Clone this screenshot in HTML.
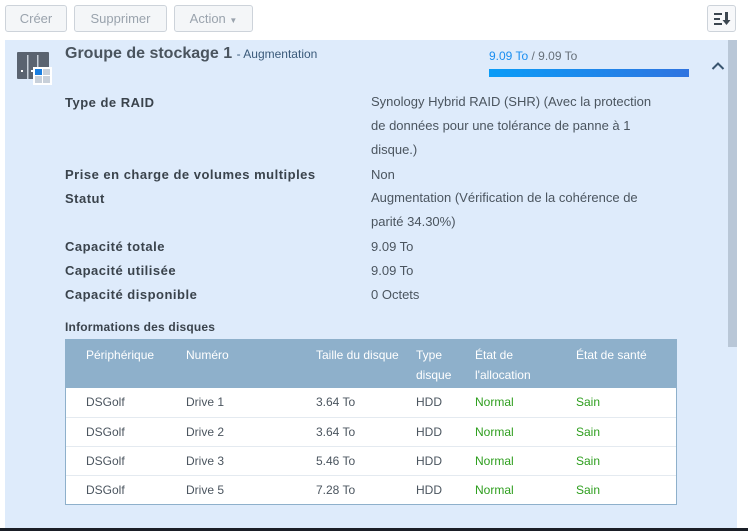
<!DOCTYPE html>
<html><head><meta charset="utf-8"><style>
*{box-sizing:border-box;margin:0;padding:0}
body{width:748px;height:531px;overflow:hidden;background:#fff;font-family:"Liberation Sans",sans-serif;font-size:13px;color:#414b55;position:relative}
.btn{position:absolute;top:5px;height:27px;border:1px solid #cdd3da;border-radius:3px;background:#f4f6f8;color:#9aa3ad;font-size:13px;line-height:25px;text-align:center}
.panel{position:absolute;left:5px;top:40px;width:732px;height:490px;background:#deebfb}
.sb{position:absolute;left:728px;top:40px;width:9px;height:307px;background:#b9c7d7}
.abs{position:absolute;white-space:nowrap}
.lbl{font-weight:bold;color:#3a434c;letter-spacing:0.5px}
.val{color:#4b555f}
table{position:absolute;left:65px;top:339px;width:612px;border-collapse:collapse;font-size:12px}
th{background:#8eb0cb;color:#fff;font-weight:normal;text-align:left;vertical-align:top;line-height:20px;padding:6px 0 0 0;height:49px}
td{background:#fff;height:29px;border-bottom:1px solid #e4eaf0;color:#4b555f}
.g{color:#2e9e1e}
</style></head><body>
<div class="btn" style="left:5px;width:62px">Créer</div>
<div class="btn" style="left:74px;width:93px">Supprimer</div>
<div class="btn" style="left:174px;width:79px">Action <span style="font-size:8px">▼</span></div>
<div class="btn" style="left:707px;width:29px;background:#f7f8fa">
<svg width="20" height="16" viewBox="0 0 20 16" style="margin-top:5px"><g fill="#3c4650"><rect x="2" y="2" width="8" height="2"/><rect x="2" y="7" width="6" height="2"/><rect x="2" y="12" width="8" height="2"/><rect x="13" y="1" width="3" height="9"/><path d="M10.5 9h8l-4 5z"/></g></svg></div>
<div class="panel"></div>
<div class="sb"></div>
<svg class="abs" style="left:16px;top:51px" width="37" height="34" viewBox="0 0 37 34"><rect x="1" y="1" width="32" height="27" rx="1" fill="#5a6370"/><rect x="11" y="4" width="1.5" height="24" fill="#c8d0da"/><rect x="21" y="4" width="1.5" height="24" fill="#c8d0da"/><rect x="5" y="19" width="2" height="2" fill="#fff"/><rect x="15" y="19" width="2" height="2" fill="#fff"/><rect x="17" y="16" width="19" height="18" fill="#fff"/><rect x="19" y="18" width="7" height="6" fill="#1a7ee0"/><rect x="27" y="18" width="7" height="6" fill="#c8d0da"/><rect x="19" y="25" width="7" height="7" fill="#c8d0da"/><rect x="27" y="25" width="7" height="7" fill="#c8d0da"/></svg>
<div class="abs" style="left:65px;top:45px;font-size:16px;font-weight:bold;color:#4a545e">Groupe de stockage 1 <span style="font-weight:normal;font-size:12px;color:#3a5a7a">- Augmentation</span></div>
<div class="abs" style="left:489px;top:49px;font-size:12px;color:#666f78"><span style="color:#1a8ef0">9.09 To</span> / 9.09 To</div>
<div class="abs" style="left:489px;top:69px;width:200px;height:8px;background:linear-gradient(90deg,#0a9cf7,#2f74e0)"></div>
<svg class="abs" style="left:711px;top:61px" width="14" height="10" viewBox="0 0 14 10"><path d="M1.5 8L7 2.5 12.5 8" stroke="#3a5570" stroke-width="2" fill="none"/></svg>
<div class="abs lbl" style="left:65px;top:95px">Type de RAID</div>
<div class="abs val" style="left:371px;top:90px;line-height:24px">Synology Hybrid RAID (SHR) (Avec la protection<br>de données pour une tolérance de panne à 1<br>disque.)</div>
<div class="abs lbl" style="left:65px;top:167px">Prise en charge de volumes multiples</div>
<div class="abs val" style="left:371px;top:167px">Non</div>
<div class="abs lbl" style="left:65px;top:191px">Statut</div>
<div class="abs val" style="left:371px;top:186px;line-height:24px">Augmentation (Vérification de la cohérence de<br>parité 34.30%)</div>
<div class="abs lbl" style="left:65px;top:239px">Capacité totale</div>
<div class="abs val" style="left:371px;top:239px">9.09 To</div>
<div class="abs lbl" style="left:65px;top:263px">Capacité utilisée</div>
<div class="abs val" style="left:371px;top:263px">9.09 To</div>
<div class="abs lbl" style="left:65px;top:287px">Capacité disponible</div>
<div class="abs val" style="left:371px;top:287px">0 Octets</div>
<div class="abs lbl" style="left:65px;top:320px;font-size:12px;letter-spacing:0.2px">Informations des disques</div>
<table>
<tr><th style="width:121px;padding-left:21px">Périphérique</th><th style="width:130px">Numéro</th><th style="width:100px">Taille du disque</th><th style="width:59px">Type<br>disque</th><th style="width:101px">État de<br>l'allocation</th><th>État de santé</th></tr>
<tr><td style="padding-left:21px">DSGolf</td><td>Drive 1</td><td>3.64 To</td><td>HDD</td><td class="g">Normal</td><td class="g">Sain</td></tr>
<tr><td style="padding-left:21px">DSGolf</td><td>Drive 2</td><td>3.64 To</td><td>HDD</td><td class="g">Normal</td><td class="g">Sain</td></tr>
<tr><td style="padding-left:21px">DSGolf</td><td>Drive 3</td><td>5.46 To</td><td>HDD</td><td class="g">Normal</td><td class="g">Sain</td></tr>
<tr><td style="padding-left:21px;border-bottom:1px solid #8eb0cb">DSGolf</td><td style="border-bottom:1px solid #8eb0cb">Drive 5</td><td style="border-bottom:1px solid #8eb0cb">7.28 To</td><td style="border-bottom:1px solid #8eb0cb">HDD</td><td class="g" style="border-bottom:1px solid #8eb0cb">Normal</td><td class="g" style="border-bottom:1px solid #8eb0cb">Sain</td></tr>
</table>
<div class="abs" style="left:65px;top:339px;width:612px;height:166px;border:1px solid #8eb0cb;pointer-events:none"></div>
<div class="abs" style="left:0;top:528px;width:748px;height:3px;background:#1a1e26"></div>
</body></html>
